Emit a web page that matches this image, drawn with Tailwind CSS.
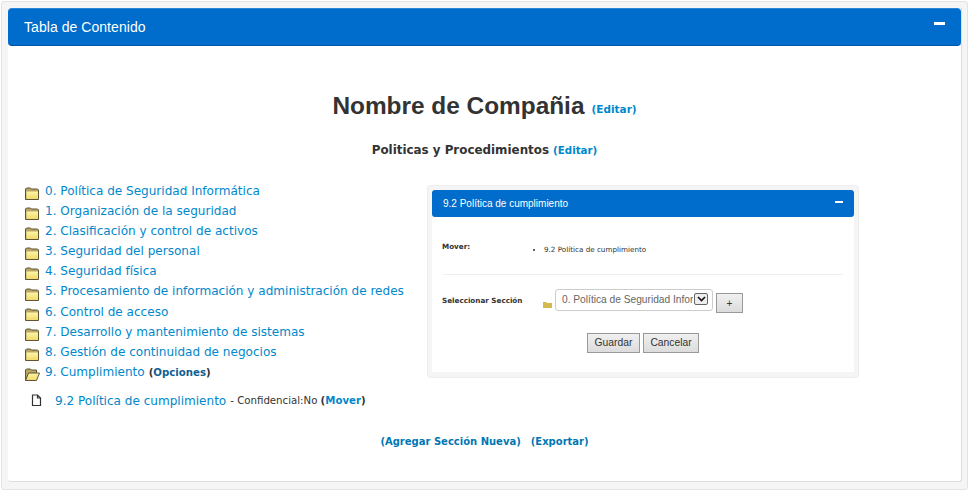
<!DOCTYPE html>
<html lang="en">

<head>
  <meta charset="UTF-8" />
  <meta name="viewport" content="width=device-width, initial-scale=1.0" />
  <title>Tabla de Contenido</title>
  <script src="https://cdn.jsdelivr.net/npm/@tailwindcss/browser@4"></script>
</head>

<body class="bg-white font-['Liberation_Sans',sans-serif]">
  <svg class="absolute w-0 h-0">
    <defs>
      <linearGradient id="folder-front" x1="0" y1="0" x2="0" y2="1">
        <stop offset="0" stop-color="#fdf6a8" />
        <stop offset="1" stop-color="#f0d968" />
      </linearGradient>
    </defs>
    <symbol id="folder" viewBox="0 0 15 15">
      <path d="M0.5 13.5V3L1.5 2H5.5L6.5 3H12.5L13.5 4V13.5Z" fill="#b9a566" stroke="#5f5433" />
      <path d="M1.5 13V5.5H13V13Z" fill="url(#folder-front)" />
    </symbol>
    <symbol id="folder-open" viewBox="0 0 15 15">
      <path d="M0.5 13.5V3L1.5 2H5.5L6.5 3H11.5V6" fill="#b9a566" stroke="#5f5433" />
      <path d="M0.5 13.5L3.5 6H14.5L11.5 13.5Z" fill="url(#folder-front)" stroke="#5f5433" />
    </symbol>
  </svg>

  <div class="w-[967px] h-[489px] mt-px ml-px bg-[#f5f5f5] border border-[#e3e3e3] rounded-[3px] pt-[6px] pl-[6px]">
    <div class="w-[954px] h-[474px] bg-white border-r border-b border-[#dddddd] rounded-b-[3px]">
      <div class="h-[38px] bg-[#006ccb] border-t border-[#2a86d6] border-b border-b-[#0056a6] rounded-[4px] flex items-center justify-between pl-[16px] pr-[16px]">
        <span class="text-white text-[14px] tracking-[0.05px]">Tabla de Contenido</span>
        <span class="w-[11px] h-[3px] bg-white -mt-[7px]"></span>
      </div>

      <div class="h-[436px] flex flex-col">
        <div class="mt-[43px] h-[34px] flex items-center justify-center gap-[7px]">
          <h1 class="text-[24.4px] leading-none font-bold text-[#333333]">Nombre de Compañia</h1>
          <a href="#" class="mt-[8px] text-[10.5px] font-bold text-[#0088cc] font-['DejaVu_Sans',sans-serif]">(Editar)</a>
        </div>
        <div class="mt-[18px] h-[18px] flex items-center justify-center gap-[4px] font-['DejaVu_Sans',sans-serif]">
          <h2 class="mt-[2px] text-[11.9px] font-bold text-[#333333]">Politicas y Procedimientos</h2>
          <a href="#" class="mt-px text-[10.3px] font-bold text-[#0088cc]">(Editar)</a>
        </div>

        <div class="mt-[22px] flex font-['DejaVu_Sans',sans-serif]">
          <div class="w-[418px] pl-[17px] text-[12.05px] text-[#0088cc]">
            <ul class="flex flex-col">
              <li class="h-[20.1px] flex items-center gap-[5px]"><svg class="w-[15px] h-[15px] mt-[5px]"><use href="#folder" /></svg><a href="#">0. Política de Seguridad Informática</a></li>
              <li class="h-[20.1px] flex items-center gap-[5px]"><svg class="w-[15px] h-[15px] mt-[5px]"><use href="#folder" /></svg><a href="#">1. Organización de la seguridad</a></li>
              <li class="h-[20.1px] flex items-center gap-[5px]"><svg class="w-[15px] h-[15px] mt-[5px]"><use href="#folder" /></svg><a href="#">2. Clasificación y control de activos</a></li>
              <li class="h-[20.1px] flex items-center gap-[5px]"><svg class="w-[15px] h-[15px] mt-[5px]"><use href="#folder" /></svg><a href="#">3. Seguridad del personal</a></li>
              <li class="h-[20.1px] flex items-center gap-[5px]"><svg class="w-[15px] h-[15px] mt-[5px]"><use href="#folder" /></svg><a href="#">4. Seguridad física</a></li>
              <li class="h-[20.1px] flex items-center gap-[5px]"><svg class="w-[15px] h-[15px] mt-[5px]"><use href="#folder" /></svg><a href="#">5. Procesamiento de información y administración de redes</a></li>
              <li class="h-[20.1px] flex items-center gap-[5px]"><svg class="w-[15px] h-[15px] mt-[5px]"><use href="#folder" /></svg><a href="#">6. Control de acceso</a></li>
              <li class="h-[20.1px] flex items-center gap-[5px]"><svg class="w-[15px] h-[15px] mt-[5px]"><use href="#folder" /></svg><a href="#">7. Desarrollo y mantenimiento de sistemas</a></li>
              <li class="h-[20.1px] flex items-center gap-[5px]"><svg class="w-[15px] h-[15px] mt-[5px]"><use href="#folder" /></svg><a href="#">8. Gestión de continuidad de negocios</a></li>
              <li class="h-[20.1px] flex items-center gap-[5px]"><svg class="w-[15px] h-[15px] mt-[5px]"><use href="#folder-open" /></svg><a href="#">9. Cumplimiento</a><span class="text-[10.2px] font-bold text-[#333333] -ml-px mt-px">(<a href="#" class="text-[#0f5f93]">Opciones</a>)</span></li>
            </ul>
            <div class="mt-[9px] ml-[6px] h-[20px] flex items-center">
              <svg class="w-[11px] h-[13px] mr-[13px]" viewBox="0 0 11 13" fill="none" stroke="#333333" stroke-width="1.2">
                <path d="M1.5 1H6.5L9.5 4V11.5H1.5Z" />
                <path d="M6.5 1V4H9.5" />
              </svg>
              <a href="#">9.2 Política de cumplimiento</a>
              <span class="ml-[4px] text-[10.2px] text-[#333333]">- Confidencial:No <b>(</b><a href="#" class="font-bold text-[#0088cc]">Mover</a><b>)</b></span>
            </div>
          </div>

          <div class="w-[432px] h-[193px] mt-[4px] ml-[1px] bg-[#f5f5f5] border border-[#eeeeee] rounded-[3px] pt-[4px] pl-[4px]">
            <div class="w-[422px] h-[182px] bg-white">
              <div class="h-[27px] bg-[#006ccb] rounded-[3px] flex items-center justify-between pl-[11px] pr-[11px] font-['Liberation_Sans',sans-serif]">
                <span class="text-white text-[10px]">9.2 Política de cumplimiento</span>
                <span class="w-[8px] h-[2px] bg-white -mt-[4px]"></span>
              </div>
              <div class="mx-[11px] h-[58px] border-b border-[#eeeeee] flex pt-[25px]">
                <span class="w-[83px] -ml-px text-[7.2px] leading-[10px] font-bold text-[#333333]">Mover:</span>
                <ul class="list-disc pl-[19px] mt-[3px] text-[7.2px] leading-[10px] text-[#333333]">
                  <li>9.2 Política de cumplimiento</li>
                </ul>
              </div>
              <div class="ml-[10px] mt-[14px] flex items-start">
                <span class="w-[101px] mt-[7px] text-[7.2px] leading-[10px] font-bold text-[#333333]">Seleccionar Sección</span>
                <svg class="w-[9px] h-[7px] mt-[12px]" viewBox="0 0 9 7"><path d="M0 7V1H3L4 2H9V7Z" fill="#d4b94c" /></svg>
                <div class="relative ml-[3px] w-[158px] h-[22px] font-['Liberation_Sans',sans-serif]">
                  <select class="block w-full h-full appearance-none border border-[#cccccc] rounded-[3px] bg-white pl-[6px] pr-[19px] text-[10.2px] text-[#666666]">
                    <option>0. Política de Seguridad Informática</option>
                  </select>
                  <span class="absolute right-[5px] top-[4px] w-[14px] h-[12px] border border-[#666666] rounded-[2px] bg-[#eeeeee] flex items-center justify-center">
                    <svg class="w-[9px] h-[6px]" viewBox="0 0 9 6" fill="none" stroke="#111111" stroke-width="1.6"><path d="M1 1L4.5 4.5L8 1" /></svg>
                  </span>
                </div>
                <button class="ml-[3px] mt-[4px] w-[27px] h-[20px] bg-linear-to-b from-[#f0f0f0] to-[#dcdcdc] border border-[#999999] text-[10px] text-[#333333] font-['Liberation_Sans',sans-serif]">+</button>
              </div>
              <div class="mt-[20px] ml-[155px] flex gap-[3px] font-['Liberation_Sans',sans-serif]">
                <button class="w-[53px] h-[20px] bg-linear-to-b from-[#f0f0f0] to-[#dcdcdc] border border-[#999999] text-[10.3px] text-[#333333]">Guardar</button>
                <button class="w-[56px] h-[20px] bg-linear-to-b from-[#f0f0f0] to-[#dcdcdc] border border-[#999999] text-[10.3px] text-[#333333]">Cancelar</button>
              </div>
            </div>
          </div>
        </div>

        <div class="mt-[23px] flex justify-center gap-[10px] text-[10px] font-bold text-[#0077b3] font-['DejaVu_Sans',sans-serif]">
          <a href="#">(Agregar Sección Nueva)</a>
          <a href="#">(Exportar)</a>
        </div>
      </div>
    </div>
  </div>
</body>

</html>
